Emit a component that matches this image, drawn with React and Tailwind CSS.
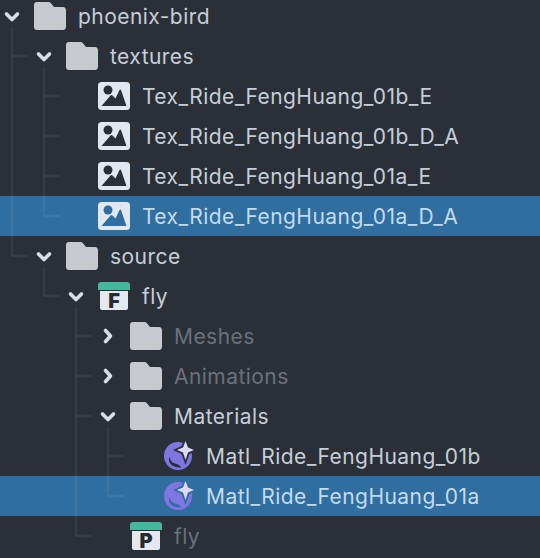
import React from "react";

const rows = [
  { depth: 0, name: "phoenix-bird", icon: "folder", open: true },
  { depth: 1, name: "textures", icon: "folder", open: true },
  { depth: 2, name: "Tex_Ride_FengHuang_01b_E", icon: "image" },
  { depth: 2, name: "Tex_Ride_FengHuang_01b_D_A", icon: "image" },
  { depth: 2, name: "Tex_Ride_FengHuang_01a_E", icon: "image" },
  { depth: 2, name: "Tex_Ride_FengHuang_01a_D_A", icon: "image", selected: true },
  { depth: 1, name: "source", icon: "folder", open: true },
  { depth: 2, name: "fly", icon: "package", letter: "F", open: true },
  { depth: 3, name: "Meshes", icon: "folder", open: false, dim: true },
  { depth: 3, name: "Animations", icon: "folder", open: false, dim: true },
  { depth: 3, name: "Materials", icon: "folder", open: true },
  { depth: 4, name: "Matl_Ride_FengHuang_01b", icon: "material" },
  { depth: 4, name: "Matl_Ride_FengHuang_01a", icon: "material", selected: true },
  { depth: 3, name: "fly", icon: "package", letter: "P", dim: true },
];

const indents = ["pl-0", "pl-8", "pl-16", "pl-24", "pl-32"];

const Chevron = ({ open }) => (
  <svg width="24" height="24" viewBox="0 0 24 24" fill="none" stroke="#d8dee6" strokeWidth="3.6" strokeLinecap="round" strokeLinejoin="round">
    {open ? <path d="M6.500 10l5.500 5.500 5.500-5.500" /> : <path d="M9.500 6.500l5 5.500-5 5.500" />}
  </svg>
);

const FolderIcon = () => (
  <svg width="32" height="28" viewBox="0 0 32 28">
    <path d="M3 0h11.500c1 0 1.700.4 2.300 1.100L20 5h9c1.700 0 3 1.300 3 3v17c0 1.700-1.300 3-3 3H3c-1.700 0-3-1.300-3-3V3c0-1.700 1.300-3 3-3z" fill="#c6c9ce" />
  </svg>
);

const ImageIcon = () => (
  <svg width="32" height="28" viewBox="0 0 32 28">
    <defs>
      <mask id="image-cut">
        <rect width="32" height="28" fill="#fff" />
        <circle cx="10" cy="8" r="4.500" fill="#000" />
        <path d="M3.500 24 L12.500 13.500 Q13.500 12.500 14.500 13.500 L17.500 16.500 L21.500 8 Q22.300 7 23 8 L28.500 24z" fill="#000" />
      </mask>
    </defs>
    <rect width="32" height="28" rx="3.500" fill="#e1e7ef" mask="url(#image-cut)" />
  </svg>
);

const PackageIcon = ({ letter }) => (
  <div className="flex flex-col items-center w-8 h-7">
    <div className="w-8 h-2 rounded-t-[3px] bg-[#45b89c]" />
    <div className="w-7 h-[19px] mt-px rounded-b-[2px] bg-[#e4e9ef] flex items-center justify-center text-[#262b33] text-[20px] leading-none font-black">
      {letter}
    </div>
  </div>
);

const MaterialIcon = () => (
  <svg width="32" height="32" viewBox="0 0 32 32">
    <defs>
      <mask id="material-cut">
        <rect width="32" height="32" fill="#fff" />
        <path d="M23.500 -3 L27.500 6 L36 10 L27.500 14 L23.500 25 L19.500 14 L11 10 L19.500 6z" fill="#000" />
        <path d="M8 17 C8 20 9.500 22.500 13 23.500 C15.500 24.200 18 25 19.500 27.500 C15 28 10.500 26.500 8.500 24 C6.500 21.500 6.500 18.500 8 17z" fill="#000" />
      </mask>
    </defs>
    <circle cx="16" cy="16" r="14" fill="#7f76e2" mask="url(#material-cut)" />
    <path d="M23.500 1 L26 7.500 L32 10 L26 12.500 L23.500 20 L21 12.500 L15 10 L21 7.500z" fill="#dcdafb" />
  </svg>
);

const RowIcon = ({ row }) => {
  if (row.icon === "folder") return <FolderIcon />;
  if (row.icon === "image") return <ImageIcon />;
  if (row.icon === "package") return <PackageIcon letter={row.letter} />;
  return <MaterialIcon />;
};

const Row = ({ row }) => {
  const textColor = row.selected ? "text-[#c3dbee]" : row.dim ? "text-[#6a717b]" : "text-[#c6ced8]";
  return (
    <div className={`h-10 flex items-center ${indents[row.depth]} ${row.selected ? "bg-[#2f6e9f]" : ""}`}>
      <div className="w-6 h-10 flex items-center justify-center">
        {row.open !== undefined && <Chevron open={row.open} />}
      </div>
      <div className="w-8 flex items-center justify-center ml-2.5">
        <RowIcon row={row} />
      </div>
      <span className={`ml-3 mt-0.5 text-[21px] tracking-[0.45px] whitespace-nowrap ${textColor}`}>{row.name}</span>
    </div>
  );
};

// tree guides sit on top of the rows, faint over the selected ones
const Guides = () => (
  <svg className="absolute inset-0 pointer-events-none" width="540" height="558" fill="none" stroke="#ffffff" strokeOpacity="0.06" strokeWidth="2.5">
    <path d="M12 28V256H28M12 56H28" />
    <path d="M44 68V216H60M44 96H60M44 136H60M44 176H60" />
    <path d="M44 268V296H60" />
    <path d="M76 308V536H92M76 336H92M76 376H92M76 416H92" />
    <path d="M108 428V496H124M108 456H124" />
  </svg>
);

export default function App() {
  return (
    <div className="relative w-[540px] h-[558px] overflow-hidden bg-[#2b3038] font-['Inter',sans-serif]">
      <div className="-mt-1">
        {rows.map((row, i) => (
          <Row key={i} row={row} />
        ))}
      </div>
      <Guides />
    </div>
  );
}
